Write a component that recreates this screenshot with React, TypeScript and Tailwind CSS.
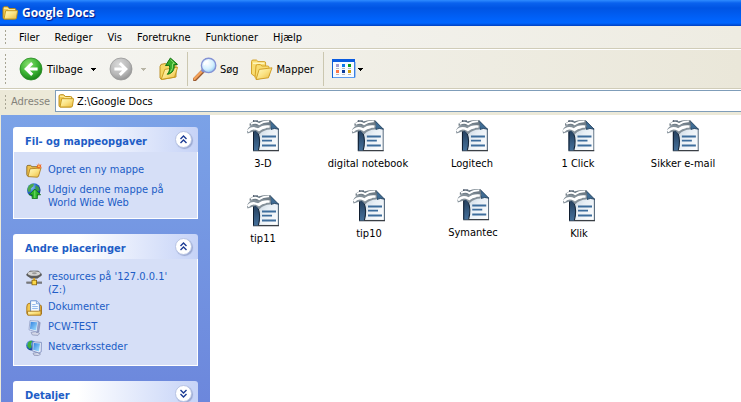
import { useState } from 'react'
import type { ReactNode } from 'react'

const MENUS = ['Filer', 'Rediger', 'Vis', 'Foretrukne', 'Funktioner', 'Hjælp']

// Free icon arrangement: centre x and top y inside the folder view
const FILES = [
  { name: '3-D', x: 53, y: 5 },
  { name: 'digital notebook', x: 158, y: 5 },
  { name: 'Logitech', x: 262, y: 5 },
  { name: '1 Click', x: 368, y: 5 },
  { name: 'Sikker e-mail', x: 473, y: 5 },
  { name: 'tip11', x: 53, y: 80 },
  { name: 'tip10', x: 159, y: 75 },
  { name: 'Symantec', x: 263, y: 74 },
  { name: 'Klik', x: 369, y: 75 },
]

function Gradients() {
  return (
    <svg className="absolute size-0" aria-hidden="true">
      <defs>
        <radialGradient id="green" cx="0.4" cy="0.3" r="0.75">
          <stop offset="0" stopColor="#8be070" />
          <stop offset="0.55" stopColor="#3db535" />
          <stop offset="1" stopColor="#147c14" />
        </radialGradient>
        <radialGradient id="grey" cx="0.4" cy="0.3" r="0.75">
          <stop offset="0" stopColor="#dadada" />
          <stop offset="0.6" stopColor="#b9b9b9" />
          <stop offset="1" stopColor="#8f8f8f" />
        </radialGradient>
        <linearGradient id="folder" x1="0" y1="0" x2="1" y2="1">
          <stop offset="0" stopColor="#fffbc4" />
          <stop offset="0.5" stopColor="#fbe384" />
          <stop offset="1" stopColor="#e9b83c" />
        </linearGradient>
        <radialGradient id="lens" cx="0.4" cy="0.35" r="0.7">
          <stop offset="0" stopColor="#ffffff" />
          <stop offset="0.6" stopColor="#d3f0ff" />
          <stop offset="1" stopColor="#8cc6ee" />
        </radialGradient>
        <linearGradient id="strip" x1="0" y1="0" x2="0" y2="1">
          <stop offset="0" stopColor="#1c3048" />
          <stop offset="0.5" stopColor="#2c4b6c" />
          <stop offset="1" stopColor="#44709b" />
        </linearGradient>
        <linearGradient id="page" x1="0" y1="0" x2="1" y2="1">
          <stop offset="0" stopColor="#b4c4d2" />
          <stop offset="0.5" stopColor="#e8eff5" />
          <stop offset="1" stopColor="#ffffff" />
        </linearGradient>
        <linearGradient id="screen" x1="0" y1="0" x2="1" y2="1">
          <stop offset="0" stopColor="#2f7fe0" />
          <stop offset="1" stopColor="#a6e4ff" />
        </linearGradient>
        <radialGradient id="globe" cx="0.35" cy="0.3" r="0.8">
          <stop offset="0" stopColor="#8cc4ff" />
          <stop offset="0.5" stopColor="#2468c8" />
          <stop offset="1" stopColor="#0d2f7c" />
        </radialGradient>
      </defs>
    </svg>
  )
}

function FolderIcon() {
  return (
    <svg className="size-4 shrink-0" viewBox="0 0 16 16" aria-hidden="true">
      <path d="M1 3.2Q1 1.7 2.5 1.7H5.6L7.4 3.5H12.5Q14 3.5 14 5V12.5Q14 14 12.5 14H2.5Q1 14 1 12.5Z" fill="#f0c850" stroke="#b8860b" strokeWidth="0.9" />
      <path d="M2 3.2H5.4L7 4.8H13" stroke="#fff6b8" strokeWidth="1" fill="none" />
      <path d="M3.7 5.7H15.6L14.4 13.2Q14.2 14 13.3 14H2Z" fill="url(#folder)" stroke="#c4951a" strokeWidth="0.9" />
    </svg>
  )
}

function BackIcon() {
  return (
    <svg className="size-6" viewBox="0 0 24 24" aria-hidden="true">
      <circle cx="12" cy="12" r="11" fill="url(#green)" stroke="#2a8a24" strokeWidth="0.8" />
      <path d="M13.2 6.2 7.2 12l6 5.8M7.6 12H18.6" stroke="#fff" strokeWidth="3" fill="none" />
    </svg>
  )
}

function ForwardIcon() {
  return (
    <svg className="size-6" viewBox="0 0 24 24" aria-hidden="true">
      <circle cx="12" cy="12" r="11" fill="url(#grey)" stroke="#989898" strokeWidth="0.8" />
      <path d="M10.8 6.2l6 5.8-6 5.8M16.4 12H5.4" stroke="#fff" strokeWidth="3" fill="none" />
    </svg>
  )
}

function UpIcon() {
  return (
    <svg className="size-6" viewBox="0 0 24 24" aria-hidden="true">
      <path d="M2 9.5 3 7.4 7.6 6.4l1.4 1.6 9-1V20L3.6 22.5 2 21Z" fill="#f6d865" stroke="#b8891a" strokeWidth="0.9" />
      <path d="M3.2 22.4 6.8 12.4l12.8-2.2L16.6 20.2Z" fill="url(#folder)" stroke="#c4951a" strokeWidth="0.9" />
      <path d="M12.4 1 19.5 7.4 16.2 7.7C16.7 12.3 14.5 16.6 9.3 17.3 11.9 14.6 11.9 11.3 11.4 8.3L7.5 8.6Z" fill="#36ac2c" stroke="#157312" strokeWidth="1" />
      <path d="M12.5 2.6 16.3 6.4 14.5 6.8Q15.3 12 12.3 15" stroke="#8be070" strokeWidth="1" fill="none" />
    </svg>
  )
}

function SearchIcon() {
  return (
    <svg className="size-6" viewBox="0 0 24 24" aria-hidden="true">
      <path d="M1.8 22.4 10.4 13.6" stroke="#9a5a30" strokeWidth="4" strokeLinecap="round" />
      <path d="M1.5 21.8 9.8 13.4" stroke="#f4a258" strokeWidth="2.4" strokeLinecap="round" />
      <path d="M9 14.6l1.9-1.9" stroke="#7f8ccc" strokeWidth="3.4" />
      <circle cx="15.6" cy="8.4" r="7.2" fill="url(#lens)" stroke="#8492d4" strokeWidth="1.4" />
      <path d="M11.2 8.2Q11.6 4.6 15.4 4" stroke="#fff" strokeWidth="1.6" fill="none" />
    </svg>
  )
}

function FoldersIcon() {
  return (
    <svg className="size-6" viewBox="0 0 24 24" aria-hidden="true">
      <path d="M1.5 4.6Q1.5 3 3 3h3.4L8 4.6h6.4Q15.6 4.6 15.6 6v11L5 19.4 1.5 17Z" fill="#f8dc70" stroke="#d09c20" strokeWidth="0.9" />
      <path d="M3 6.2h11.4" stroke="#fffbd0" strokeWidth="1.2" />
      <path d="M6 9Q6 7.6 7.4 7.6h3L11.8 9h6q1.2 0 1.2 1.4V19L7 22.4 5 20.6Z" fill="#f8dc70" stroke="#d09c20" strokeWidth="0.9" />
      <path d="M9.2 12.4 22 10.8 18.4 20.8 6 22.5Z" fill="url(#folder)" stroke="#cc981e" strokeWidth="0.9" />
    </svg>
  )
}

function ViewsIcon() {
  return (
    <svg className="h-5 w-6" viewBox="0 0 24 20" aria-hidden="true">
      <rect x="0.5" y="0.5" width="22" height="18" fill="#f8fbff" stroke="#1463d4" />
      <path d="M0 0H23V3H0Z" fill="#0a5ce0" />
      <path d="M1 18.5H23V3" stroke="#5c9cf0" fill="none" />
      <rect x="4" y="5" width="3" height="3" fill="#a09cd0" />
      <rect x="10" y="5" width="3" height="3" fill="#0c78e8" />
      <rect x="16" y="5" width="3" height="3" fill="#0c9c1c" />
      <rect x="4" y="11" width="3" height="3" fill="#fc7848" />
      <rect x="10" y="11" width="3" height="3" fill="#0c3c9c" />
      <rect x="16" y="11" width="3" height="3" fill="#cc9c0c" />
      <path d="M4 9.5h3M10 9.5h3M16 9.5h3M4 15.5h3M10 15.5h3M16 15.5h3" stroke="#b4b8c0" />
    </svg>
  )
}

function Caret({ className }: { className: string }) {
  return (
    <svg className={className} viewBox="0 0 5 3" width="5" height="3" shapeRendering="crispEdges" aria-hidden="true">
      <path d="M0 0h5v1H4v1H3v1H2V2H1V1H0Z" fill="currentColor" />
    </svg>
  )
}

function NewFolderIcon() {
  return (
    <svg className="size-4 shrink-0" viewBox="0 0 16 16" aria-hidden="true">
      <path d="M0.8 3.6Q0.8 2.4 2 2.4h2.6L6 3.7h6.2V13H2.4Q0.8 13 0.8 11.6Z" fill="#eec04c" stroke="#7c5c14" strokeWidth="0.8" />
      <path d="M4 5.8 15 5 12.6 13Q12.2 14.2 11 14.2L2 13.6Z" fill="url(#folder)" stroke="#a87818" strokeWidth="0.8" />
      <path d="M12.8 0l.8 1.9 2-.6-.9 1.8 1.2 1.6-2-.1-.9 1.9-.8-1.9-2 .3 1.3-1.6-.9-1.8 1.8.5Z" fill="#f4641c" />
      <circle cx="12.9" cy="3.2" r="0.9" fill="#ffd060" />
    </svg>
  )
}

function PublishIcon() {
  return (
    <svg className="size-4 shrink-0" viewBox="0 0 16 16" aria-hidden="true">
      <circle cx="7.8" cy="7" r="6.8" fill="url(#globe)" />
      <path d="M3 2.6Q6 0.2 8 1L7.2 3.4 4.8 5.6 5 8 2.4 9 1.4 6Z" fill="#4ca84c" />
      <path d="M10 2l3 2.4.6 3L10.6 8 9.2 4.6Z" fill="#3f9a48" />
      <path d="M8.8 6 14.6 11.8H11.4V15.6H6.2V11.8H3Z" fill="#2eb42c" stroke="#0f6c14" strokeWidth="0.8" />
      <path d="M8.8 7.6V15" stroke="#7ae06a" strokeWidth="1" />
    </svg>
  )
}

function NetDriveIcon() {
  return (
    <svg className="size-4 shrink-0" viewBox="0 0 16 16" aria-hidden="true">
      <path d="M0.8 4 4 1h8.4L15.4 4V5.4L11.4 8.2H5L0.8 5.4Z" fill="#5c5c5c" stroke="#505050" strokeWidth="0.6" />
      <ellipse cx="8" cy="3.5" rx="6.2" ry="2.3" fill="#d4d4d4" />
      <ellipse cx="8.4" cy="3.2" rx="2.4" ry="1" fill="#989898" />
      <path d="M8.2 8v3" stroke="#e0a820" strokeWidth="1.8" />
      <path d="M0.4 12.6H16" stroke="#383838" strokeWidth="1.8" />
      <path d="M0.4 12.2H16" stroke="#c0c0c0" strokeWidth="0.7" />
      <rect x="6" y="10.2" width="4.6" height="4.6" fill="#fbd848" stroke="#8c6408" strokeWidth="0.8" />
    </svg>
  )
}

function DocumentsIcon() {
  return (
    <svg className="size-4 shrink-0" viewBox="0 0 16 16" aria-hidden="true">
      <path d="M0.8 7Q0.8 3.4 3 3.4H5V14.6H2Q0.8 14.6 0.8 13Z" fill="#f4c850" stroke="#a87414" strokeWidth="0.9" />
      <path d="M13 5.2h1.4q1 0 1 1.2V14H12Z" fill="#e8ac34" stroke="#94640c" strokeWidth="0.9" />
      <path d="M4.6 0.8H10.6L13.4 3.6V12.4H4.6Z" fill="#fafdff" stroke="#5c8cd0" strokeWidth="0.9" />
      <path d="M10.4 0.8V3.8h3" fill="#cfe2fa" stroke="#5c8cd0" strokeWidth="0.7" />
      <path d="M6.2 4.6h3.4M6.2 6.6h5.6M6.2 8.6h5.6" stroke="#7cacec" strokeWidth="0.9" />
      <path d="M1.4 11.2H12.4L15 10.8V15.2H1.8Z" fill="url(#folder)" stroke="#a87414" strokeWidth="0.9" />
    </svg>
  )
}

function ComputerIcon() {
  return (
    <svg className="size-4 shrink-0" viewBox="0 0 16 16" aria-hidden="true">
      <path d="M5 12.4 10 11.6 13.6 13.4 12 15.4 6.4 15Z" fill="#d4d8e8" stroke="#8890b4" strokeWidth="0.7" />
      <path d="M11.6 1.2 14.2 2.6 12.8 12 10.4 12.4Z" fill="#98a2c8" stroke="#7078a4" strokeWidth="0.5" />
      <path d="M4 0.6 12.4 1.2 11 12 3 9.8Z" fill="#eef2fc" stroke="#8494c0" strokeWidth="0.7" />
      <path d="M4.7 1.7 11.3 2.2 10.1 10.6 3.9 8.9Z" fill="url(#screen)" />
    </svg>
  )
}

function NetPlacesIcon() {
  return (
    <svg className="size-4 shrink-0" viewBox="0 0 16 16" aria-hidden="true">
      <circle cx="5.2" cy="5.4" r="5" fill="url(#globe)" />
      <path d="M2 2.4Q4.2 0.2 6.2 1L5 4 5.6 7 3.6 9 1.2 6Z" fill="#3fae3c" />
      <path d="M7 13.2 11.4 12.4 14.6 14 12.6 15.6 8 15.2Z" fill="#d4d8e8" stroke="#8088ac" strokeWidth="0.7" />
      <path d="M7 1.8 15.4 2.4 15.2 11.8 13 13 6.2 10.8Z" fill="#e6ecfa" stroke="#7484b8" strokeWidth="0.8" />
      <path d="M7.9 3 14 3.5 12.9 11.4 7.1 9.8Z" fill="url(#screen)" />
    </svg>
  )
}

function DocIcon() {
  return (
    <svg className="size-8" viewBox="0 0 32 32" aria-hidden="true">
      <path d="M8 1H24L31 8.5V30H8Z" fill="url(#page)" />
      <path d="M31.4 8.5V30.5" stroke="#53677a" strokeWidth="1.1" />
      <path d="M6 30.5H32" stroke="#3a3f45" strokeWidth="1.1" />
      <path d="M6 31.5H32" stroke="#c4c6ca" strokeWidth="0.9" />
      <path d="M6 0.6H11V13Q14.2 21 11 30.4H6Z" fill="url(#strip)" />
      <path d="M11.2 13.4Q14 21 11.4 30" stroke="#16283c" strokeWidth="1.1" fill="none" />
      <path d="M6.5 0.6V30.4" stroke="#101e30" strokeWidth="1" />
      <path d="M23.2 0.8 31.6 9.2Q27 7.6 24 9.4Z" fill="#3f6c94" stroke="#1f3d5a" strokeWidth="0.9" />
      <path d="M15 16.5H29M15 20.6H25M15 25.5H29" stroke="#3d6d9c" strokeWidth="1.8" />
      {/* the two gulls, each with a soft shadow under the wings */}
      <path d="M2.6 3.4Q8 -0.4 11.6 1.6 15.4 -0.4 23.4 0.2L24 5.4 13.4 7 9.6 5.6 2.6 5.8Z" fill="#707d87" />
      <path d="M-0.2 11Q2 5 8 4.8 12 6.6 15.4 4.2L24.4 5.4 23 9.6Q17 9.6 12.4 14.2L8.6 10.8 0.6 13.6Z" fill="#85919a" />
      <path d="M3.8 4Q8.6 1.4 12.2 4.2 16 1.2 22 1.4" stroke="#fff" strokeWidth="1.8" fill="none" strokeLinejoin="round" />
      <path d="M0.8 11.4Q5 6.4 11.4 9.6 15.6 6 22.6 6.6" stroke="#fff" strokeWidth="2.4" fill="none" strokeLinejoin="round" />
      <path d="M11.4 11Q15 8 19 7.6" stroke="#fff" strokeWidth="1.4" fill="none" />
    </svg>
  )
}

function Grip({ className }: { className: string }) {
  return <span className={`w-[3px] shrink-0 bg-[radial-gradient(circle,#a8a594_1px,transparent_1px)] bg-[length:3px_4px] ${className}`} />
}

function TaskPanel({ title, open: initiallyOpen, children }: { title: string; open: boolean; children?: ReactNode }) {
  const [open, setOpen] = useState(initiallyOpen)

  return (
    <section>
      <h2 className="flex h-[25px] items-center justify-between rounded-t-[3px] bg-linear-to-r from-white from-35% to-[#c6d3f7] pr-1.5 pl-3 text-[11px] font-bold text-[#215dc6]">
        <span className="pt-1">{title}</span>
        <button
          aria-label={open ? 'Skjul' : 'Vis'}
          aria-expanded={open}
          onClick={() => setOpen(!open)}
          className="flex size-[17px] items-center justify-center rounded-full border border-[#b8c4e4] bg-white shadow-[1px_1px_1px_#9aa8d0]"
        >
          <svg className={open ? 'size-[9px]' : 'size-[9px] rotate-180'} viewBox="0 0 9 9" aria-hidden="true">
            <path d="M1.5 4 4.5 1l3 3M1.5 8l3-3 3 3" stroke="#1c3c94" strokeWidth="1.4" fill="none" />
          </svg>
        </button>
      </h2>
      {open && (
        <ul className="flex flex-col gap-1 border border-t-0 border-white bg-[#d6dff7] px-3 pt-[11px] pb-[9px]">
          {children}
        </ul>
      )}
    </section>
  )
}

function TaskLink({ icon, children }: { icon: ReactNode; children: ReactNode }) {
  return (
    <li>
      <a href="#" className="flex items-start gap-1.5 text-[11px] leading-[13px] text-[#215dc6] hover:underline">
        {icon}
        <span>{children}</span>
      </a>
    </li>
  )
}

export default function App() {
  const [path, setPath] = useState('Z:\\Google Docs')

  return (
    <div className="flex h-screen flex-col overflow-hidden bg-[#ece9d8] font-['DejaVu_Sans_Condensed','DejaVu_Sans',sans-serif] text-[11px] leading-[13px] text-black">
      <Gradients />

      {/* Title bar */}
      <header className="flex h-[26px] shrink-0 items-center gap-1 bg-[linear-gradient(#2f8cff_0,#0a62ee_3px,#0054e3_8px,#0062fa_19px,#0066ff_23px,#0040c0_26px)] pl-0.5">
        <FolderIcon />
        <h1 className="font-['Open_Sans',sans-serif] text-[12px] leading-4 font-bold text-white [text-shadow:1px_1px_1px_#0a1883]">Google Docs</h1>
      </header>

      {/* Menu bar */}
      <nav className="flex h-[23px] shrink-0 items-center gap-px border-b border-[#d0ccb8] bg-linear-to-r from-[#f6f6f4] to-[#eeece2] pl-1">
        <Grip className="mr-1 h-4" />
        {MENUS.map((menu) => (
          <button key={menu} className="px-[7px] py-0.5 hover:bg-[#316ac5] hover:text-white">{menu}</button>
        ))}
      </nav>

      {/* Toolbar */}
      <div className="flex h-10 shrink-0 items-center border-t border-b border-t-white border-b-[#d0ccb8] bg-linear-to-r from-[#f6f6f3] to-[#eae7d9] pl-1">
        <Grip className="mr-3 h-8" />
        <button className="flex items-center gap-1"><BackIcon />Tilbage</button>
        <button aria-label="Tilbage til" className="px-2 py-2"><Caret className="text-black" /></button>
        <button aria-label="Frem" disabled className="ml-[5px]"><ForwardIcon /></button>
        <button aria-label="Frem til" disabled className="px-2 py-2"><Caret className="text-[#b8b5a6]" /></button>
        <button aria-label="Op" className="ml-1"><UpIcon /></button>
        <span className="mx-[5px] h-[34px] w-px bg-[#cbc7b0]" />
        <button className="flex items-center gap-[3px]"><SearchIcon />Søg</button>
        <button className="ml-[11px] flex items-center gap-[3px]"><FoldersIcon />Mapper</button>
        <span className="mr-2 ml-[9px] h-[34px] w-px bg-[#cbc7b0]" />
        <button aria-label="Visninger" className="flex items-center gap-0.5"><ViewsIcon /><Caret className="text-black" /></button>
      </div>

      {/* Address bar */}
      <div className="flex h-[26px] shrink-0 items-start border-t border-white pl-1">
        <Grip className="mt-1 mr-1 h-4" />
        <label htmlFor="address" className="w-11 pt-[5px] text-[#84827a]">Adresse</label>
        <div className="flex h-[22px] flex-1 items-center gap-[3px] border border-r-0 border-[#7f9db9] bg-white pl-0.5">
          <FolderIcon />
          <input id="address" value={path} onChange={(e) => setPath(e.target.value)} className="min-w-0 flex-1 bg-transparent pt-px outline-none" />
        </div>
      </div>

      <div className="flex min-h-0 flex-1 pl-px">
        <aside className="flex w-[209px] shrink-0 flex-col gap-[15px] overflow-hidden bg-linear-to-b from-[#7ba2e7] to-[#6c87dc] px-3 pt-3">
          <TaskPanel title="Fil- og mappeopgaver" open>
            <TaskLink icon={<NewFolderIcon />}>Opret en ny mappe</TaskLink>
            <TaskLink icon={<PublishIcon />}>Udgiv denne mappe på World Wide Web</TaskLink>
          </TaskPanel>
          <TaskPanel title="Andre placeringer" open>
            <TaskLink icon={<NetDriveIcon />}>resources på '127.0.0.1' (Z:)</TaskLink>
            <TaskLink icon={<DocumentsIcon />}>Dokumenter</TaskLink>
            <TaskLink icon={<ComputerIcon />}>PCW-TEST</TaskLink>
            <TaskLink icon={<NetPlacesIcon />}>Netværkssteder</TaskLink>
          </TaskPanel>
          <TaskPanel title="Detaljer" open={false} />
        </aside>

        <main className="relative flex-1 overflow-hidden bg-white">
          {FILES.map((file) => (
            <button
              key={file.name}
              style={{ left: file.x, top: file.y }}
              className="absolute flex -translate-x-1/2 flex-col items-center gap-[5px] whitespace-nowrap"
            >
              <DocIcon />
              <span>{file.name}</span>
            </button>
          ))}
        </main>
      </div>
    </div>
  )
}
